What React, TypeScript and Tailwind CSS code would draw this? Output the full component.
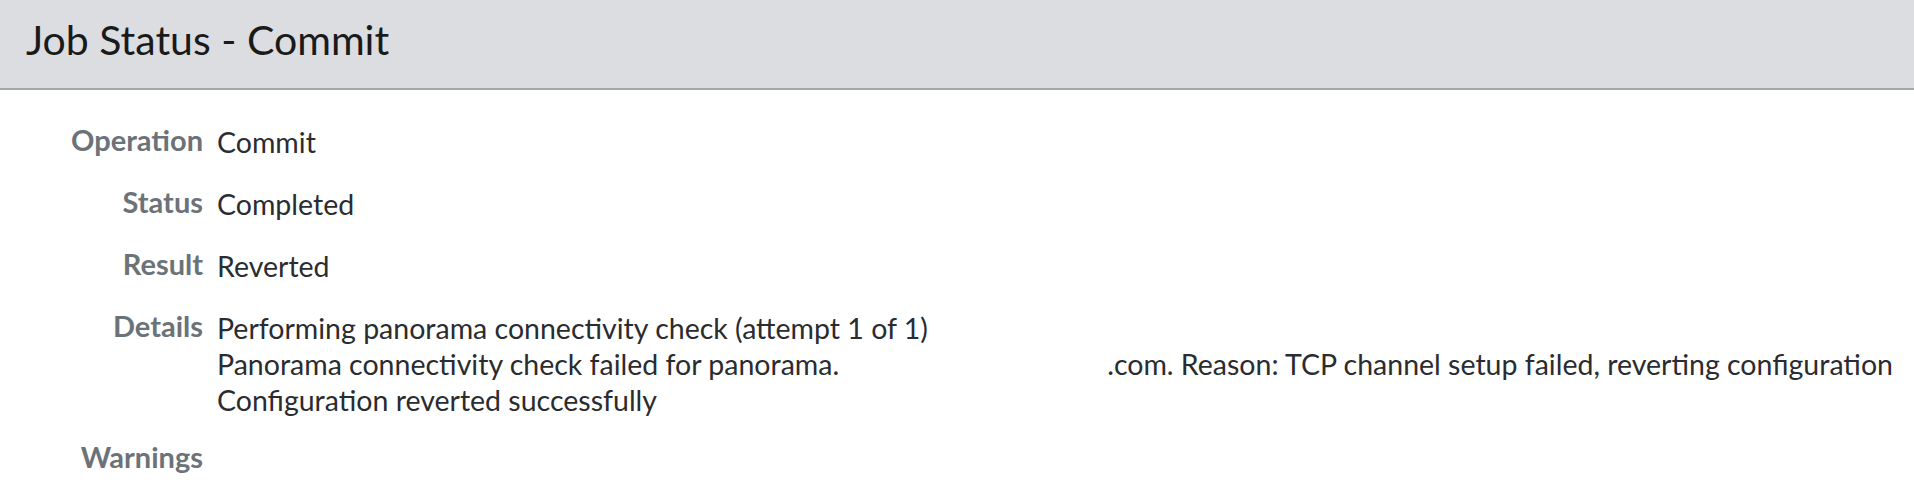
import React from "react";

const font = { fontFamily: "Lato, 'Noto Sans', sans-serif" };

function Row({ label, children, className = "" }: { label: string; children?: React.ReactNode; className?: string }) {
  return (
    <div className={"grid grid-cols-[203px_1fr] gap-x-[14px] " + className}>
      <div className="text-right font-bold text-[29px] leading-[32px] text-[#6b7278]">{label}</div>
      <div className="text-[28.5px] leading-[36px] text-[#2a2c2f]">{children}</div>
    </div>
  );
}

export default function App() {
  return (
    <div className="w-[1914px] h-[502px] bg-white overflow-hidden" style={font}>
      <div className="h-[90px] bg-[#dcdde0] border-b-2 border-[#a5a8ab] flex items-center pl-[26px]">
        <h1 className="text-[41px] leading-none text-[#1a1a1a] font-normal -mt-[10px]">Job Status - Commit</h1>
      </div>
      <div className="pt-[34px] flex flex-col">
        <Row label="Operation" className="mb-[26px]">Commit</Row>
        <Row label="Status" className="mb-[26px]">Completed</Row>
        <Row label="Result" className="mb-[26px]">Reverted</Row>
        <Row label="Details" className="mb-[23px]">
          <div>Performing panorama connectivity check (attempt 1 of 1)</div>
          <div className="whitespace-nowrap">
            Panorama connectivity check failed for panorama.
            <span className="inline-block w-[268px]" />
            .com. Reason: TCP channel setup failed, reverting configuration
          </div>
          <div>Configuration reverted successfully</div>
        </Row>
        <Row label="Warnings" />
      </div>
    </div>
  );
}
